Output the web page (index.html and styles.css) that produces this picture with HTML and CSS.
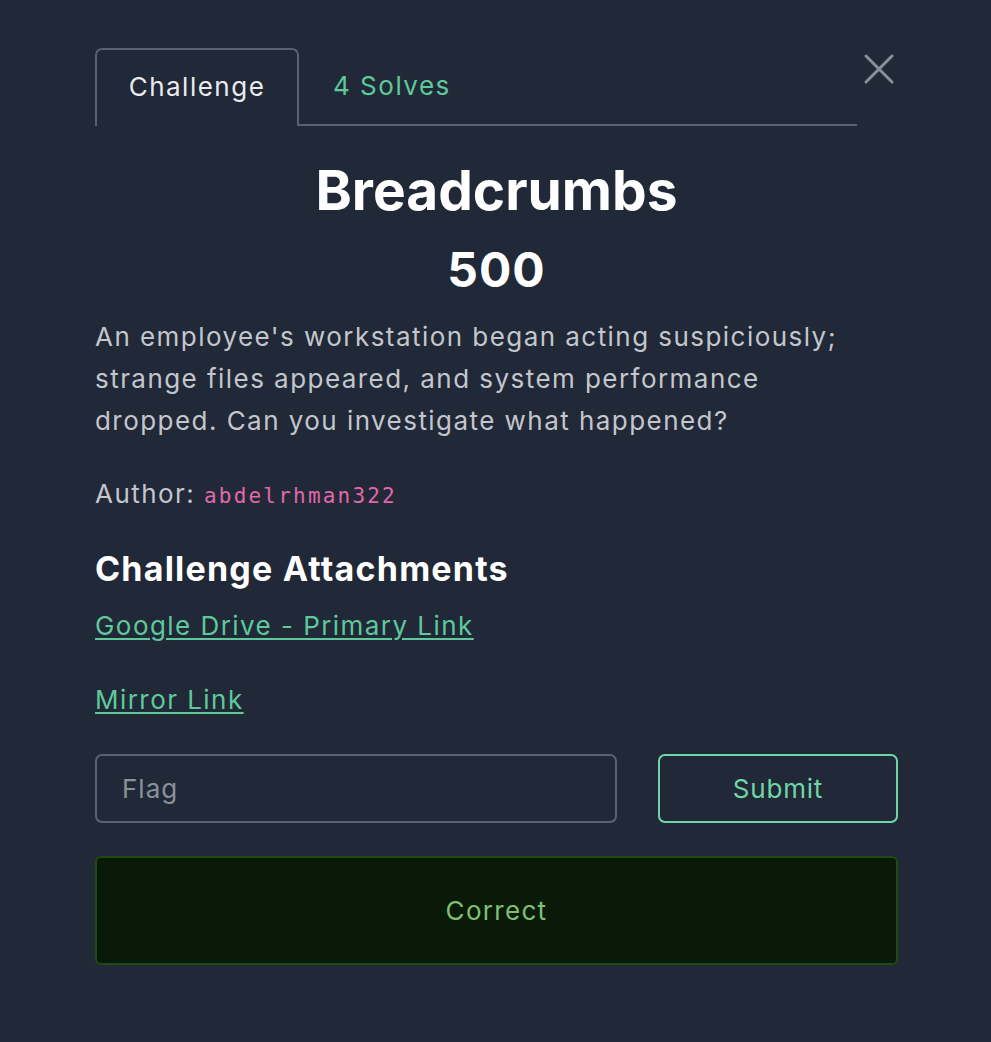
FILE: index.html
```html
<!DOCTYPE html>
<html>
<head>
<meta charset="utf-8">
<link rel="stylesheet" href="styles.css">
</head>
<body>
<div class="modal">
  <div class="header">
    <nav class="tabs">
      <div class="tab active">Challenge</div>
      <div class="tab solves">4 Solves</div>
    </nav>
    <button class="close" aria-label="Close">
      <svg width="32" height="32" viewBox="0 0 32 32"><path d="M3 3 L29 29 M29 3 L3 29" stroke="#8a909b" stroke-width="3" stroke-linecap="round" fill="none"/></svg>
    </button>
  </div>
  <h1 class="title">Breadcrumbs</h1>
  <div class="points">500</div>
  <p class="desc">An employee's workstation began acting suspiciously; strange files appeared, and system performance dropped. Can you investigate what happened?</p>
  <p class="author">Author: <code>abdelrhman322</code></p>
  <h2 class="attach">Challenge Attachments</h2>
  <p class="link"><a href="#">Google Drive - Primary Link</a></p>
  <p class="link"><a href="#">Mirror Link</a></p>
  <div class="form">
    <div class="input">Flag</div>
    <div class="submit">Submit</div>
  </div>
  <div class="correct">Correct</div>
</div>
</body>
</html>
```
FILE: styles.css
```css
html, body {
  margin: 0;
  padding: 0;
  background: #212837;
}
body {
  font-family: Inter, "Noto Sans", sans-serif;
  color: #c9ccd2;
}
.modal {
  width: 803px;
  margin-left: 95px;
  padding-top: 48px;
}
.header {
  display: flex;
  align-items: flex-start;
}
.tabs {
  width: 762px;
  display: flex;
  border-bottom: 2px solid #5b6170;
  height: 76px;
}
.tab {
  font-size: 26px;
  letter-spacing: 1.5px;
  display: flex;
  align-items: center;
  justify-content: center;
  box-sizing: border-box;
  height: 78px;
  padding-bottom: 4px;
}
.tab.active {
  width: 204px;
  border: 2px solid #5b6170;
  border-bottom: none;
  border-radius: 7px 7px 0 0;
  color: #e9ebef;
  background: #212837;
}
.tab.solves {
  color: #5ec99a;
  padding-left: 34px;
}
.close {
  margin-left: 4px;
  margin-top: 3px;
  background: none;
  border: none;
  padding: 0;
  width: 36px;
  height: 36px;
  display: flex;
  align-items: center;
  justify-content: center;
}
.title {
  margin: 31px 0 0;
  text-align: center;
  font-size: 55px;
  font-weight: 700;
  color: #ffffff;
  line-height: 66px;
}
.points {
  text-align: center;
  font-size: 48px;
  font-weight: 700;
  color: #ffffff;
  line-height: 60px;
  margin-top: 17px;
  letter-spacing: 1px;
}
.desc {
  max-width: 762px;
  margin: 16px 0 0;
  font-size: 26px;
  line-height: 42px;
  letter-spacing: 1.45px;
  color: #c3c6cc;
}
.author {
  margin: 34px 0 0;
  font-size: 26px;
  line-height: 36px;
  letter-spacing: 1.45px;
  color: #c3c6cc;
}
.author code {
  font-family: "DejaVu Sans Mono", "Liberation Mono", monospace;
  font-size: 21px;
  letter-spacing: 2.2px;
  color: #e069aa;
}
.attach {
  margin: 35px 0 0;
  font-size: 34px;
  font-weight: 700;
  color: #ffffff;
  line-height: 40px;
  letter-spacing: 1.2px;
}
.link {
  margin: 17px 0 0;
  font-size: 26px;
  line-height: 40px;
  letter-spacing: 1.45px;
}
.link + .link {
  margin-top: 34px;
}
.link a {
  color: #5ec99a;
  text-decoration: underline;
  text-underline-offset: 3px;
  text-decoration-thickness: 2px;
}
.form {
  display: flex;
  gap: 41px;
  margin-top: 34px;
}
.input {
  width: 522px;
  height: 69px;
  box-sizing: border-box;
  border: 2px solid #5b6170;
  border-radius: 7px;
  padding-left: 25px;
  display: flex;
  align-items: center;
  font-size: 26px;
  letter-spacing: 1px;
  color: #8b9099;
}
.submit {
  width: 240px;
  height: 69px;
  box-sizing: border-box;
  border: 2px solid #6fd6a6;
  border-radius: 7px;
  display: flex;
  align-items: center;
  justify-content: center;
  font-size: 26px;
  letter-spacing: 0.8px;
  color: #6fd6a6;
}
.correct {
  margin-top: 33px;
  height: 109px;
  box-sizing: border-box;
  border: 2px solid #1e4a14;
  border-radius: 6px;
  background: #0a1a08;
  display: flex;
  align-items: center;
  justify-content: center;
  font-size: 26px;
  letter-spacing: 1.3px;
  color: #80bf72;
}
```
